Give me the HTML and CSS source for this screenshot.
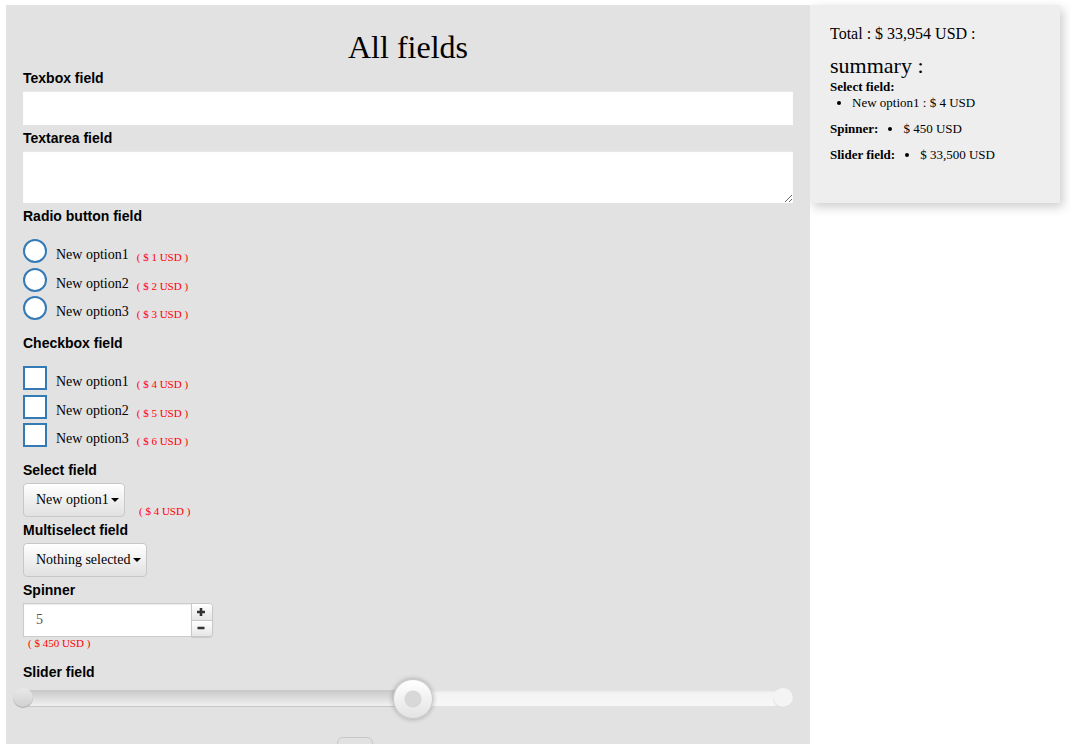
FILE: index.html
```
<!DOCTYPE html>
<html lang="en">
<head>
<meta charset="utf-8">
<title>All fields</title>
<link rel="stylesheet" href="styles.css">
</head>
<body>
<div class="page">
  <form class="form">
    <h1 class="title">All fields</h1>

    <div class="field">
      <label class="label" for="textbox">Texbox field</label>
      <input class="text" id="textbox" type="text">
    </div>
    <div class="field">
      <label class="label" for="area">Textarea field</label>
      <textarea class="text area" id="area"></textarea>
    </div>

    <fieldset class="group">
      <legend class="label">Radio button field</legend>
      <div class="option"><input class="tick round" type="radio" name="radio" id="r1"><label class="name" for="r1">New option1</label><span class="price">( $ 1 USD )</span></div>
      <div class="option"><input class="tick round" type="radio" name="radio" id="r2"><label class="name" for="r2">New option2</label><span class="price">( $ 2 USD )</span></div>
      <div class="option"><input class="tick round" type="radio" name="radio" id="r3"><label class="name" for="r3">New option3</label><span class="price">( $ 3 USD )</span></div>
    </fieldset>
    <fieldset class="group">
      <legend class="label">Checkbox field</legend>
      <div class="option"><input class="tick" type="checkbox" id="c1"><label class="name" for="c1">New option1</label><span class="price">( $ 4 USD )</span></div>
      <div class="option"><input class="tick" type="checkbox" id="c2"><label class="name" for="c2">New option2</label><span class="price">( $ 5 USD )</span></div>
      <div class="option"><input class="tick" type="checkbox" id="c3"><label class="name" for="c3">New option3</label><span class="price">( $ 6 USD )</span></div>
    </fieldset>

    <div class="field">
      <label class="label" for="select">Select field</label>
      <div class="row">
        <span class="picker">
          <select class="select" id="select"><option>New option1</option></select>
          <svg class="caret" viewBox="0 0 8 4" aria-hidden="true"><path d="M0 0h8L4 4z"/></svg>
        </span>
        <span class="price">( $ 4 USD )</span>
      </div>
    </div>
    <div class="field">
      <label class="label" for="multi">Multiselect field</label>
      <div class="row">
        <span class="picker">
          <select class="select" id="multi"><option>Nothing selected</option></select>
          <svg class="caret" viewBox="0 0 8 4" aria-hidden="true"><path d="M0 0h8L4 4z"/></svg>
        </span>
      </div>
    </div>
    <div class="field spinner-field">
      <label class="label" for="spinner">Spinner</label>
      <div class="spinner">
        <input class="number" id="spinner" type="text" inputmode="numeric" value="5">
        <div class="steps">
          <button class="step" type="button" aria-label="Increase"><svg viewBox="0 0 8 8"><path d="M2.7 0h2.6v2.7H8v2.6H5.3V8H2.7V5.3H0V2.7h2.7z"/></svg></button>
          <button class="step" type="button" aria-label="Decrease"><svg viewBox="0 0 8 8"><path d="M.5 2.7h7v2.6h-7z"/></svg></button>
        </div>
      </div>
      <span class="price">( $ 450 USD )</span>
    </div>
    <div class="field slider-field">
      <label class="label" for="slider">Slider field</label>
      <div class="slider">
        <span class="cap cap-start"></span>
        <span class="cap cap-end"></span>
        <input class="range" id="slider" type="range" min="0" max="67000" value="33500">
      </div>
    </div>
    <div class="actions"><button class="send" type="button" aria-label="Submit"></button></div>
  </form>

  <aside class="summary">
    <p class="total">Total : $ 33,954 USD :</p>
    <h2 class="heading">summary :</h2>
    <div class="entry stacked"><b>Select field:</b><ul><li>New option1 : $ 4 USD</li></ul></div>
    <div class="entry"><b>Spinner:</b><ul><li>$ 450 USD</li></ul></div>
    <div class="entry"><b>Slider field:</b><ul><li>$ 33,500 USD</li></ul></div>
  </aside>
</div>
</body>
</html>
```

FILE: styles.css
```
* { box-sizing: border-box; }

body {
  margin: 0;
  background: #fff;
  color: #000;
  font: 14px/20px "Liberation Serif", "Times New Roman", serif;
}

.page {
  display: flex;
  align-items: flex-start;
  height: 100vh;
  overflow: hidden;
  padding: 5px 12px 0 6px;
}

/* Form column */
.form {
  flex: 1;
  min-width: 0;
  padding: 24px 17px;
  background: #e2e2e2;
}
.title {
  margin: 0 0 2px;
  font-size: 32px;
  line-height: 37px;
  font-weight: 400;
  text-align: center;
}
.label {
  display: block;
  padding: 0;
  margin-bottom: 3px;
  font: bold 14px/20px "Liberation Sans", Arial, sans-serif;
}
.field { margin-bottom: 3px; }

.text {
  display: block;
  width: 100%;
  height: 34px;
  padding: 6px 12px;
  border: 0;
  background: #fff;
  box-shadow: inset 0 1px 1px rgba(0, 0, 0, 0.1);
  font: inherit;
}
.area { height: 52px; resize: vertical; }

.group { margin: 0; padding: 0 0 10px; border: 0; min-width: 0; }
.group .label { margin-bottom: 13px; }
.option {
  display: flex;
  align-items: flex-start;
  height: 28px;
}
.option:nth-of-type(2) { margin-top: 1px; }
.group { padding-bottom: 9px; }
.tick {
  appearance: none;
  width: 24px;
  height: 24px;
  margin: 0 9px 0 0;
  border: 2px solid #337ab7;
  background: #fff;
}
.round { border-radius: 50%; }
.tick:checked { background: #337ab7; box-shadow: inset 0 0 0 4px #fff; }
.name { margin: 6px 8px 0 0; }
.price {
  color: #f00;
  font-size: 11px;
  line-height: 13px;
}
.option .price { margin-top: 12px; }

.row { display: flex; align-items: flex-end; gap: 14px; }
.row .price { line-height: 12px; }
.picker { position: relative; display: block; }
.select {
  appearance: none;
  display: block;
  height: 34px;
  padding: 0 15px 0 12px;
  border: 1px solid #c8c8c8;
  border-radius: 4px;
  background: linear-gradient(#fff, #e1e1e1);
  color: #000;
  font: inherit;
}
.caret {
  position: absolute;
  top: 15px;
  right: 6px;
  width: 8px;
  height: 4px;
  pointer-events: none;
}

.spinner { display: flex; width: 190px; height: 34px; }
.number {
  flex: 1;
  min-width: 0;
  padding: 0 12px;
  border: 1px solid #ccc;
  background: #fff;
  box-shadow: inset 0 1px 1px rgba(0, 0, 0, 0.08);
  color: #555;
  font: inherit;
}
.steps {
  display: flex;
  flex-direction: column;
  width: 22px;
  margin-left: -1px;
  border: 1px solid #c8c8c8;
  border-radius: 0 4px 4px 0;
  box-shadow: 0 1px 1px rgba(0, 0, 0, 0.1);
  overflow: hidden;
}
.step {
  flex: 1;
  display: grid;
  place-items: center;
  padding: 0 2px 0 0;
  border: 0;
  background: linear-gradient(#fff, #e6e6e6);
}
.step + .step { border-top: 1px solid #c8c8c8; }
.step svg { width: 8px; height: 8px; fill: #333; }
.spinner-field { margin-bottom: 12px; }
.spinner-field .price { display: block; padding-left: 5px; }

/* Slider: groove and end caps on the wrapper, the handle on the range input */
.slider-field .label { margin: 0; }
.slider { position: relative; height: 37px; margin: -3px -10px 21px; padding-left: 10px; }
.slider::before,
.slider::after {
  content: "";
  position: absolute;
  top: 11px;
  height: 16px;
}
.slider::before {
  left: 10px;
  right: 49%;
  border-bottom: 1px solid #c6c6c6;
  background: linear-gradient(#c8c8c8, #f1f1f1);
}
.slider::after {
  left: 51%;
  right: 20px;
  background: linear-gradient(#e2e2e2, #f3f3f3 3px, #f7f7f7);
}
.cap {
  position: absolute;
  z-index: 1;
  top: 9px;
  width: 20px;
  height: 20px;
  border-radius: 50%;
}
.cap-start {
  left: 0;
  background: linear-gradient(#e9e9e9, #cfcfcf);
  box-shadow: inset 0 -1px 0 #b4b4b4;
}
.cap-end {
  right: 10px;
  background: #f4f4f4;
  box-shadow: inset 0 -1px 0 #d8d8d8;
}
.range {
  appearance: none;
  position: relative;
  z-index: 2;
  display: block;
  width: 100%;
  height: 40px;
  margin: 0;
  background: transparent;
}
.range::-webkit-slider-thumb {
  appearance: none;
  width: 40px;
  height: 40px;
  border: 1px solid #c9c9c9;
  border-radius: 50%;
  background:
    radial-gradient(circle, #d8d8d8 8px, transparent 9px),
    linear-gradient(#fff, #e3e3e3);
  box-shadow: 0 0 5px rgba(0, 0, 0, 0.3);
}

.actions {
  display: flex;
  justify-content: center;
  padding-right: 106px;
}
.send {
  width: 36px;
  height: 34px;
  border: 1px solid #c8c8c8;
  border-radius: 6px;
  background: #e2e2e2;
}

/* Summary card */
.summary {
  flex: 0 0 250px;
  min-height: 198px;
  padding: 20px;
  background: #eee;
  box-shadow: 3px 4px 10px rgba(0, 0, 0, 0.2);
  clip-path: inset(-10px -10px -20px 0);
  font-size: 13px;
  line-height: 16px;
}
.total { margin: 0; font-size: 16px; line-height: 18px; }
.heading { margin: 10px 0 0; font-size: 22px; line-height: 26px; font-weight: 400; }
.entry { display: flex; margin-bottom: 10px; }
.stacked { flex-direction: column; }
.entry ul { margin: 0; padding-left: 25px; }
.stacked ul { padding-left: 22px; }
```
